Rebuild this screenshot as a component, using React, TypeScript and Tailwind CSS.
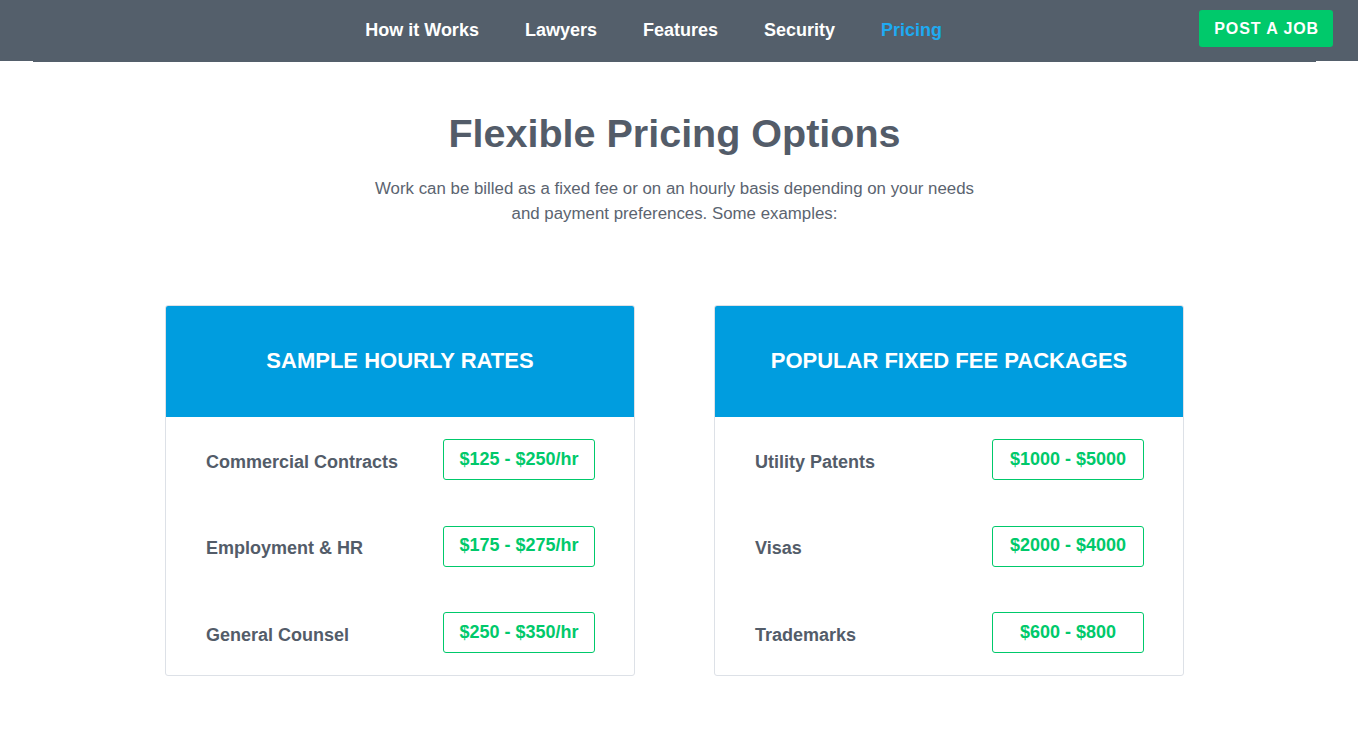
const navItems = ['How it Works', 'Lawyers', 'Features', 'Security', 'Pricing'];

interface PricingCardProps {
  title: string;
  rows: { label: string; price: string }[];
}

const hourly = [
  { label: 'Commercial Contracts', price: '$125 - $250/hr' },
  { label: 'Employment & HR', price: '$175 - $275/hr' },
  { label: 'General Counsel', price: '$250 - $350/hr' },
];

const fixed = [
  { label: 'Utility Patents', price: '$1000 - $5000' },
  { label: 'Visas', price: '$2000 - $4000' },
  { label: 'Trademarks', price: '$600 - $800' },
];

const PricingCard = ({ title, rows }: PricingCardProps) => (
  <div className="w-[470px] overflow-hidden rounded-[3px] border border-[#dde1e7] bg-white">
    <div className="flex h-[111px] items-center justify-center bg-[#009ddf] pb-[1px]">
      <h2 className="text-[22px] font-bold uppercase leading-none text-white">{title}</h2>
    </div>
    <div className="flex flex-col gap-[45.5px] pb-[22px] pl-[40px] pr-[39px] pt-[22px]">
      {rows.map(row => (
        <div key={row.label} className="flex items-center justify-between">
          <span className="pt-[4px] text-[18px] font-bold leading-none text-[#535c69]">{row.label}</span>
          <span className="flex h-[41px] w-[152px] items-center justify-center rounded-[3px] border border-[#00c96b] pb-[2px] text-[18px] font-bold leading-none text-[#00c96b]">
            {row.price}
          </span>
        </div>
      ))}
    </div>
  </div>
);

export default function App() {
  return (
    <div className="min-h-[733px] bg-white font-['Liberation_Sans',Arial,sans-serif]">
      <header className="bg-[#545f6b]">
        <div className="flex h-[61px] items-center pb-[1px] pr-[25px]">
          <div className="w-[108px]" />
          <nav className="flex flex-1 justify-center">
            {navItems.map(item => (
              <a
                key={item}
                href="#"
                className={`px-[23px] text-[18px] font-bold leading-none ${
                  item === 'Pricing' ? 'text-[#1eaaf1]' : 'text-white'
                }`}
              >
                {item}
              </a>
            ))}
          </nav>
          <button className="mb-[3px] h-[37px] rounded-[3px] bg-[#00c96b] pl-[15px] pr-[14px] text-[16px] font-bold uppercase leading-none tracking-[0.9px] text-white">
            Post a Job
          </button>
        </div>
      </header>
      <div className="pr-[9px]">
        <div className="mx-[33px] h-[1px] bg-[#545f6b]" />
        <section className="flex flex-col items-center pt-[47px]">
          <h1 className="text-[39.5px] font-bold leading-[48px] text-[#535c69]">Flexible Pricing Options</h1>
          <p className="mt-[19px] w-[620px] text-center text-[16.85px] leading-[25px] text-[#5b6470]">
            Work can be billed as a fixed fee or on an hourly basis depending on your needs and payment preferences. Some
            examples:
          </p>
          <div className="mt-[79px] flex gap-[79px]">
            <PricingCard title="Sample Hourly Rates" rows={hourly} />
            <PricingCard title="Popular Fixed Fee Packages" rows={fixed} />
          </div>
        </section>
      </div>
    </div>
  );
}
